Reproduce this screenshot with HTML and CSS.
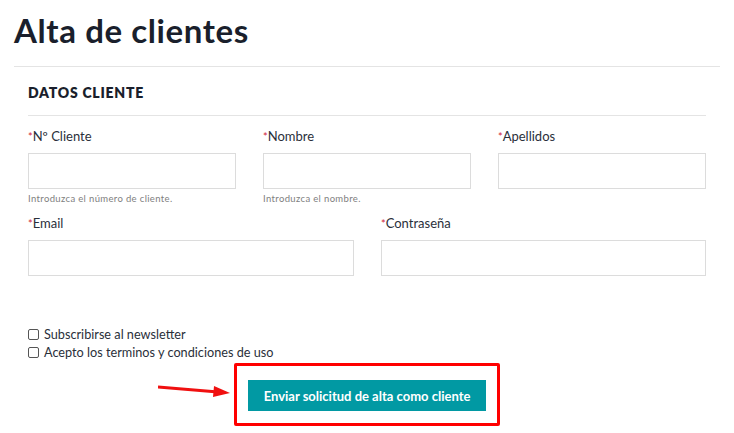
FILE: index.html
```html
<!DOCTYPE html>
<html lang="es">
<head>
<meta charset="utf-8">
<title>Alta de clientes</title>
<link rel="stylesheet" href="styles.css">
</head>
<body>
<div class="page">
  <h1 class="title">Alta de clientes</h1>
  <div class="panel">
    <h2 class="section-title">DATOS CLIENTE</h2>
    <div class="row row-3">
      <div class="field">
        <label class="label"><span class="req">*</span>Nº Cliente</label>
        <div class="input"></div>
        <div class="help">Introduzca el número de cliente.</div>
      </div>
      <div class="field">
        <label class="label"><span class="req">*</span>Nombre</label>
        <div class="input"></div>
        <div class="help">Introduzca el nombre.</div>
      </div>
      <div class="field">
        <label class="label"><span class="req">*</span>Apellidos</label>
        <div class="input"></div>
      </div>
    </div>
    <div class="row row-2">
      <div class="field">
        <label class="label"><span class="req">*</span>Email</label>
        <div class="input"></div>
      </div>
      <div class="field">
        <label class="label"><span class="req">*</span>Contraseña</label>
        <div class="input"></div>
      </div>
    </div>
    <div class="checks">
      <label class="check"><span class="box"></span>Subscribirse al newsletter</label>
      <label class="check"><span class="box"></span>Acepto los terminos y condiciones de uso</label>
    </div>
    <div class="submit-area">
      <svg class="arrow" width="76" height="14" viewBox="0 0 76 14">
        <line x1="0" y1="3" x2="60" y2="8" stroke="#f01010" stroke-width="3"/>
        <polygon points="56,2 72,9 55,13" fill="#f01010"/>
      </svg>
      <div class="highlight">
        <button class="btn" type="button">Enviar solicitud de alta como cliente</button>
      </div>
    </div>
  </div>
</div>
</body>
</html>
```
FILE: styles.css
```css
html, body {
  margin: 0;
  padding: 0;
  background: #ffffff;
}
body {
  font-family: Lato, "Noto Sans", sans-serif;
  color: #1d2233;
}
.page {
  padding: 0 14px;
  width: 706px;
}
.title {
  margin: 0;
  padding-top: 10px;
  height: 67px;
  box-sizing: border-box;
  font-size: 33px;
  line-height: 40px;
  font-weight: 700;
  letter-spacing: 0.6px;
  color: #1a1f2c;
  border-bottom: 1px solid #e4e4e4;
}
.panel {
  padding: 0 14px;
}
.section-title {
  margin: 0;
  height: 49px;
  box-sizing: border-box;
  padding-top: 17px;
  font-size: 14px;
  line-height: 18px;
  font-weight: 800;
  letter-spacing: 0.75px;
  color: #1a1f2c;
  border-bottom: 1px solid #e4e4e4;
}
.row {
  display: grid;
  column-gap: 27px;
}
.row-3 {
  grid-template-columns: 208px 208px 208px;
  margin-top: 12px;
  height: 87px;
}
.row-2 {
  grid-template-columns: 326px 325px;
}
.field {
  display: flex;
  flex-direction: column;
}
.label {
  font-size: 13px;
  line-height: 17px;
  color: #2a2f3a;
  height: 25px;
}
.req {
  color: #d0243a;
  font-size: 11px;
}
.input {
  height: 36px;
  box-sizing: border-box;
  border: 1px solid #dcdcdc;
  background: #fff;
}
.help {
  margin-top: 4px;
  font-size: 9.5px;
  line-height: 12px;
  color: #808080;
  letter-spacing: 0.35px;
}
.checks {
  margin-top: 50px;
  display: flex;
  flex-direction: column;
  gap: 2px;
}
.check {
  display: flex;
  align-items: center;
  font-size: 12.7px;
  line-height: 16px;
  color: #2a2f3a;
}
.box {
  width: 9px;
  height: 9px;
  border: 1px solid #555;
  border-radius: 2px;
  margin-right: 5px;
  flex: none;
}
.submit-area {
  display: flex;
  align-items: flex-start;
  margin-top: 3px;
  margin-left: 130px;
}
.arrow {
  margin-top: 21px;
}
.highlight {
  border: 3px solid #ff0000;
  border-radius: 2px;
  padding: 14px 11px 12px 11px;
}
.btn {
  display: block;
  width: 238px;
  height: 31px;
  border: none;
  background: #0199a3;
  color: #ffffff;
  font-family: Lato, "Noto Sans", sans-serif;
  font-size: 13px;
  font-weight: 700;
  padding: 0;
}
```
